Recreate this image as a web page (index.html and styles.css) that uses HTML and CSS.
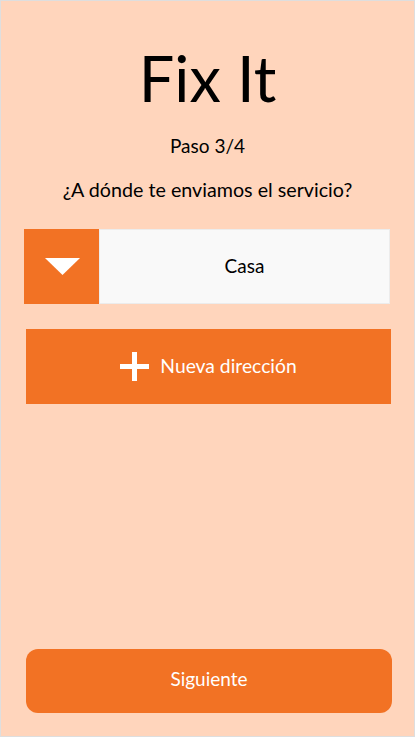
FILE: index.html
```html
<!DOCTYPE html>
<html lang="es">
<head>
    <meta charset="UTF-8">
    <meta name="viewport" content="width=device-width, initial-scale=1.0">
    <title>Fix It - Paso 3/4</title>
    <link rel="stylesheet" href="styles.css">
</head>
<body>
    <div class="screen">
        <h1 class="logo">Fix It</h1>
        <p class="step">Paso 3/4</p>
        <p class="question">¿A dónde te enviamos el servicio?</p>

        <div class="address-select">
            <div class="select-toggle">
                <svg width="35" height="17" viewBox="0 0 35 17">
                    <polygon points="0,0 35,0 17.5,17" fill="#ffffff"/>
                </svg>
            </div>
            <div class="select-value">Casa</div>
        </div>

        <button class="btn-new">
            <svg class="plus" width="29" height="29" viewBox="0 0 29 29">
                <rect x="12" y="0" width="5" height="29" fill="#ffffff"/>
                <rect x="0" y="12" width="29" height="5" fill="#ffffff"/>
            </svg>
            <span>Nueva dirección</span>
        </button>

        <div class="spacer"></div>

        <button class="btn-next">Siguiente</button>
    </div>
</body>
</html>
```

FILE: styles.css
```css
body {
    margin: 0;
    font-family: 'Lato', 'Open Sans', sans-serif;
    color: #000000;
}
.screen {
    height: 737px;
    box-sizing: border-box;
    border: 1px solid #dedede;
    background-color: #ffd5bc;
    display: flex;
    flex-direction: column;
    padding: 0 23px 23px 23px;
}
.logo {
    margin: 37px 0 0 0;
    font-size: 63px;
    font-weight: normal;
    line-height: 80px;
    text-align: center;
}
.step {
    margin: 16px 0 0 0;
    font-size: 19px;
    line-height: 24px;
    text-align: center;
}
.question {
    margin: 20px 0 0 0;
    font-size: 19.7px;
    line-height: 24px;
    text-align: center;
}
.address-select {
    display: flex;
    height: 75px;
    margin-top: 27px;
    margin-right: 1px;
}
.select-toggle {
    width: 75px;
    background-color: #f27224;
    display: flex;
    align-items: center;
    justify-content: center;
}
.select-toggle svg {
    margin-left: 1px;
    margin-top: -1px;
}
.select-value {
    flex: 1;
    background-color: #f9f9f9;
    border: 1px solid #ececec;
    display: flex;
    align-items: center;
    justify-content: center;
    font-size: 19px;
    padding-bottom: 2px;
}
button {
    font-family: 'Lato', 'Open Sans', sans-serif;
    background-color: #f27224;
    color: white;
    border: none;
    cursor: pointer;
}
.btn-new {
    height: 75px;
    margin: 25px 0 0 2px;
    display: flex;
    align-items: center;
    justify-content: center;
    gap: 11px;
    font-size: 19.3px;
}
.btn-new span {
    margin-bottom: 3px;
}
.spacer {
    flex: 1;
}
.btn-next {
    height: 64px;
    margin: 0 -1px 0 2px;
    padding-bottom: 6px;
    border-radius: 12px;
    font-size: 19px;
}
```
